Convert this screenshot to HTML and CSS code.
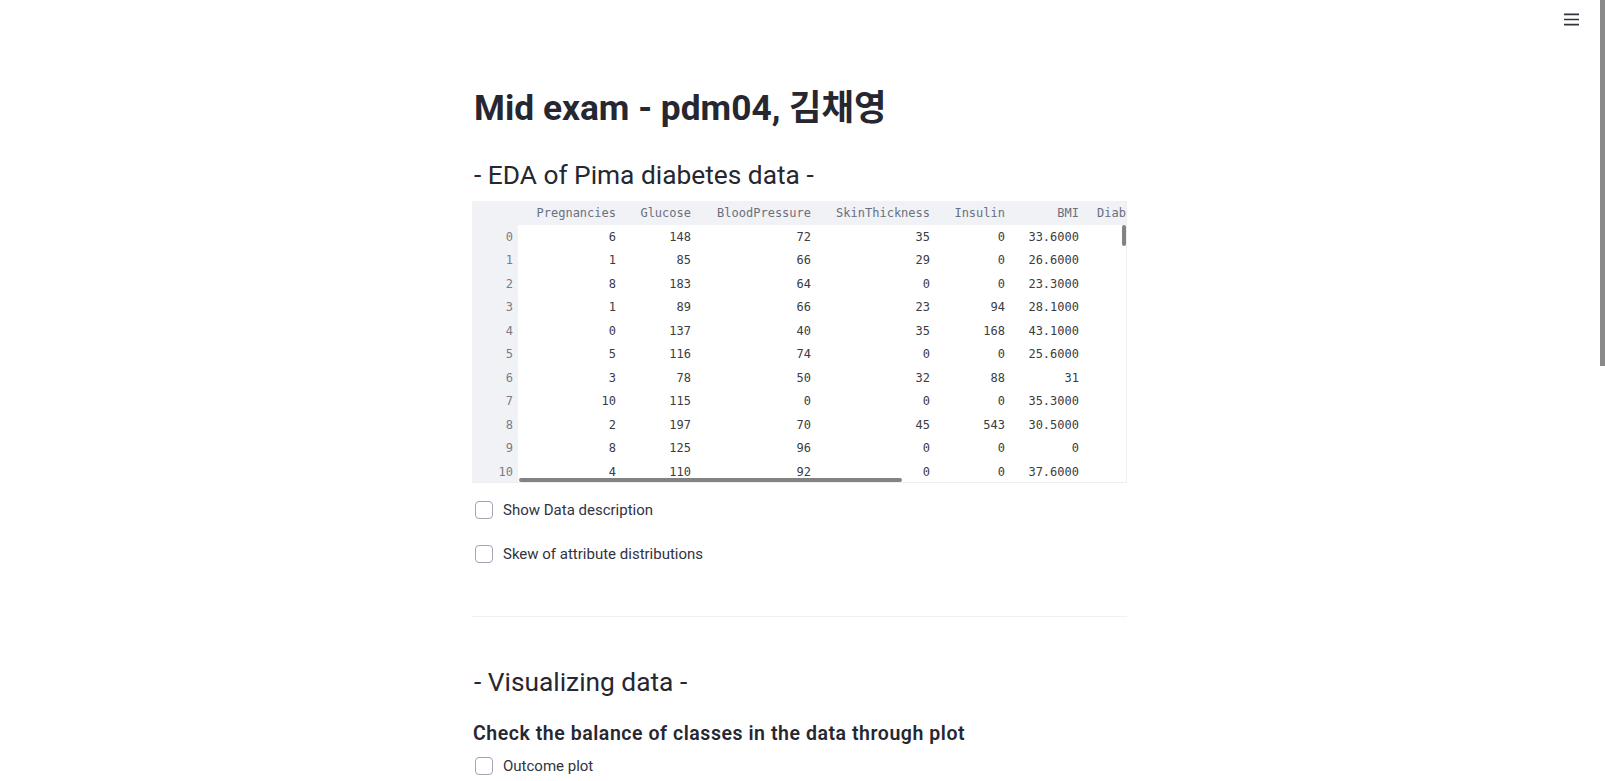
FILE: index.html
```html
<!DOCTYPE html>
<html lang="ko">
<head>
<meta charset="utf-8">
<title>Mid exam - pdm04</title>
<link rel="stylesheet" href="styles.css">
</head>
<body>
<div class="menu-btn" aria-label="menu">
  <svg width="15" height="13" viewBox="0 0 15 13"><path d="M0 1.3H15M0 6.5H15M0 11.7H15" stroke="#31333f" stroke-width="1.7" fill="none"/></svg>
</div>
<div class="scroll-thumb"></div>
<div class="page">
  <main class="block">
    <h1 class="title">Mid exam - pdm04, 김채영</h1>
    <h2 class="header eda">- EDA of Pima diabetes data -</h2>
    <div class="frame">
      <table class="df">
        <colgroup>
          <col class="c-idx"><col class="c-preg"><col class="c-glu"><col class="c-bp"><col class="c-skin"><col class="c-ins"><col class="c-bmi"><col class="c-dpf"><col class="c-age"><col class="c-out">
        </colgroup>
        <thead>
          <tr><th class="corner"></th><th>Pregnancies</th><th>Glucose</th><th>BloodPressure</th><th>SkinThickness</th><th>Insulin</th><th>BMI</th><th class="dpf">DiabetesPedigreeFunction</th><th>Age</th><th>Outcome</th></tr>
        </thead>
        <tbody>
          <tr><th>0</th><td>6</td><td>148</td><td>72</td><td>35</td><td>0</td><td>33.6000</td><td>0.6270</td><td>50</td><td>1</td></tr>
          <tr><th>1</th><td>1</td><td>85</td><td>66</td><td>29</td><td>0</td><td>26.6000</td><td>0.3510</td><td>31</td><td>0</td></tr>
          <tr><th>2</th><td>8</td><td>183</td><td>64</td><td>0</td><td>0</td><td>23.3000</td><td>0.6720</td><td>32</td><td>1</td></tr>
          <tr><th>3</th><td>1</td><td>89</td><td>66</td><td>23</td><td>94</td><td>28.1000</td><td>0.1670</td><td>21</td><td>0</td></tr>
          <tr><th>4</th><td>0</td><td>137</td><td>40</td><td>35</td><td>168</td><td>43.1000</td><td>2.2880</td><td>33</td><td>1</td></tr>
          <tr><th>5</th><td>5</td><td>116</td><td>74</td><td>0</td><td>0</td><td>25.6000</td><td>0.2010</td><td>30</td><td>0</td></tr>
          <tr><th>6</th><td>3</td><td>78</td><td>50</td><td>32</td><td>88</td><td>31</td><td>0.2480</td><td>26</td><td>1</td></tr>
          <tr><th>7</th><td>10</td><td>115</td><td>0</td><td>0</td><td>0</td><td>35.3000</td><td>0.1340</td><td>29</td><td>0</td></tr>
          <tr><th>8</th><td>2</td><td>197</td><td>70</td><td>45</td><td>543</td><td>30.5000</td><td>0.1580</td><td>53</td><td>1</td></tr>
          <tr><th>9</th><td>8</td><td>125</td><td>96</td><td>0</td><td>0</td><td>0</td><td>0.2320</td><td>54</td><td>1</td></tr>
          <tr><th>10</th><td>4</td><td>110</td><td>92</td><td>0</td><td>0</td><td>37.6000</td><td>0.1910</td><td>30</td><td>0</td></tr>
          <tr><th>11</th><td>10</td><td>168</td><td>74</td><td>0</td><td>0</td><td>38.0000</td><td>0.5370</td><td>34</td><td>1</td></tr>
        </tbody>
      </table>
      <div class="hthumb"></div>
      <div class="vthumb"></div>
    </div>
    <label class="check first"><span class="box"></span><span class="lbl">Show Data description</span></label>
    <label class="check second"><span class="box"></span><span class="lbl">Skew of attribute distributions</span></label>
    <hr class="divider">
    <h2 class="header vis">- Visualizing data -</h2>
    <h3 class="sub">Check the balance of classes in the data through plot</h3>
    <label class="check third"><span class="box"></span><span class="lbl">Outcome plot</span></label>
  </main>
</div>
</body>
</html>
```
FILE: styles.css
```css
html, body {
  margin: 0;
  padding: 0;
  background: #ffffff;
  height: 781px;
  overflow: hidden;
}
body {
  font-family: Roboto, "Noto Sans CJK KR", sans-serif;
  color: #262730;
  position: relative;
}
.menu-btn {
  position: absolute;
  top: 13px;
  right: 26px;
  width: 15px;
  height: 13px;
  line-height: 0;
}
.scroll-thumb {
  position: absolute;
  top: 0;
  right: 0;
  width: 5px;
  height: 366px;
  background: #8a8a8a;
}
.page {
  display: flex;
  justify-content: center;
  padding-right: 6px;
}
.block {
  width: 655px;
  padding-top: 86px;
  display: flex;
  flex-direction: column;
}
.title {
  margin: 0;
  font-size: 35.3px;
  line-height: 44px;
  font-weight: 700;
  padding-left: 2px;
  color: #262730;
}
.header {
  margin: 0;
  font-size: 26.3px;
  line-height: 36px;
  font-weight: 400;
  padding-left: 2px;
  color: #262730;
}
.eda { margin-top: 27px; }
.vis { margin-top: 47px; }
.sub {
  margin: 22px 0 0;
  font-size: 19.5px;
  letter-spacing: 0.55px;
  line-height: 24px;
  font-weight: 600;
  padding-left: 1px;
}
.frame {
  margin-top: 8px;
  position: relative;
  height: 281px;
  overflow: hidden;
  border-right: 1px solid #eceef2;
  border-bottom: 1px solid #eceef2;
}
.df {
  border-collapse: collapse;
  table-layout: fixed;
  width: 999px;
  font-family: "DejaVu Sans Mono", "Liberation Mono", monospace;
  font-size: 12px;
}
.c-idx { width: 46px; }
.c-preg { width: 103px; }
.c-glu { width: 75px; }
.c-bp { width: 120px; }
.c-skin { width: 119px; }
.c-ins { width: 75px; }
.c-bmi { width: 74px; }
.c-dpf { width: 184px; }
.c-age { width: 100px; }
.c-out { width: 103px; }
.df th, .df td {
  padding: 0 5px 0 0;
  text-align: right;
  white-space: nowrap;
  overflow: hidden;
  font-weight: 400;
}
.df thead th {
  height: 24px;
  background: #f0f2f6;
  color: #6b6f7e;
}
.df thead th.dpf { text-align: left; padding-left: 13px; }
.df tbody tr { height: 23.5px; }
.df tbody th {
  background: #f0f2f6;
  color: #7a7d8a;
}
.df tbody td {
  color: #3a3b44;
}
.hthumb {
  position: absolute;
  left: 47px;
  top: 277px;
  width: 383px;
  height: 4px;
  border-radius: 2px;
  background: #838383;
}
.vthumb {
  position: absolute;
  left: 650px;
  top: 24px;
  width: 4px;
  height: 21px;
  border-radius: 2px;
  background: #838383;
}
.check {
  display: flex;
  align-items: center;
  gap: 10px;
  height: 18px;
  padding-left: 3px;
  font-size: 15px;
  color: #31333f;
}
.check.first { margin-top: 18px; }
.check.second { margin-top: 26px; }
.check.third { margin-top: 11px; }
.box {
  width: 18px;
  height: 18px;
  box-sizing: border-box;
  border: 1px solid #a2a6b4;
  border-radius: 4px;
  background: #fff;
  flex: none;
}
.lbl { line-height: 18px; }
.divider {
  margin: 53px 0 0;
  border: 0;
  height: 1px;
  background: #eff0f4;
}
```
